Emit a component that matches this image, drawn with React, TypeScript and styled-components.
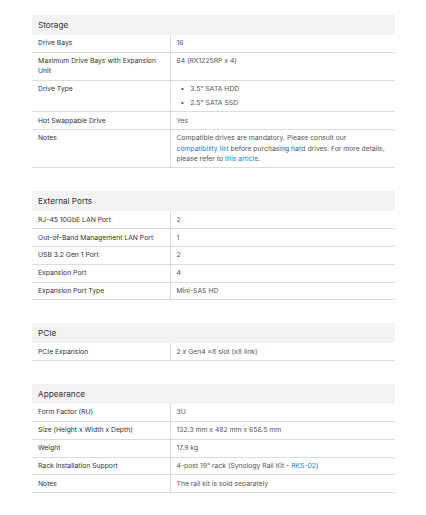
import React from "react";
import styled, { createGlobalStyle } from "styled-components";

const GlobalStyle = createGlobalStyle`
  body {
    margin: 0;
    background: #ffffff;
    font-family: Inter, "Noto Sans", sans-serif;
    color: #333333;
  }
`;

const Page = styled.div`
  padding: 15px 0 20px 32px;
  display: flex;
  flex-direction: column;
  gap: 23px;
`;

const Section = styled.table`
  width: 363px;
  border-collapse: collapse;
  font-size: 6.8px;
  line-height: 10.3px;
  table-layout: fixed;
`;

const LabelCol = styled.col`
  width: 138px;
`;

const HeadCell = styled.th`
  background: #f3f3f3;
  text-align: left;
  font-weight: 400;
  font-size: 8.2px;
  color: #333;
  height: 20px;
  padding: 0 6px;
`;

const Row = styled.tr`
  border-bottom: 1px solid #dcdcdc;
`;

const Label = styled.td`
  padding: 3.3px 6px 3.2px;
  vertical-align: top;
  border-right: 1px solid #dcdcdc;
  color: #333;
`;

const Value = styled.td`
  padding: 3.3px 6px 3.2px;
  vertical-align: top;
  color: #555;
`;

const Bullets = styled.ul`
  margin: 0;
  padding: 0 0 0 4px;
  list-style: none;
  display: flex;
  flex-direction: column;
  gap: 3.4px;
  li::before {
    content: "•";
    margin-right: 6px;
  }
`;

const Link = styled.a`
  color: #1a7fe0;
  text-decoration: none;
`;

type Spec = { label: string; value: React.ReactNode };

const sections: { title: string; rows: Spec[] }[] = [
  {
    title: "Storage",
    rows: [
      { label: "Drive Bays", value: "16" },
      { label: "Maximum Drive Bays with Expansion Unit", value: "64 (RX1225RP x 4)" },
      {
        label: "Drive Type",
        value: (
          <Bullets>
            <li>3.5" SATA HDD</li>
            <li>2.5" SATA SSD</li>
          </Bullets>
        ),
      },
      { label: "Hot Swappable Drive", value: "Yes" },
      {
        label: "Notes",
        value: (
          <>
            Compatible drives are mandatory. Please consult our{" "}
            <Link href="#">compatibility list</Link> before purchasing hard drives. For more details,
            please refer to <Link href="#">this article</Link>.
          </>
        ),
      },
    ],
  },
  {
    title: "External Ports",
    rows: [
      { label: "RJ-45 10GbE LAN Port", value: "2" },
      { label: "Out-of-Band Management LAN Port", value: "1" },
      { label: "USB 3.2 Gen 1 Port", value: "2" },
      { label: "Expansion Port", value: "4" },
      { label: "Expansion Port Type", value: "Mini-SAS HD" },
    ],
  },
  {
    title: "PCIe",
    rows: [{ label: "PCIe Expansion", value: "2 x Gen4 ×8 slot (x8 link)" }],
  },
  {
    title: "Appearance",
    rows: [
      { label: "Form Factor (RU)", value: "3U" },
      { label: "Size (Height x Width x Depth)", value: "132.3 mm x 482 mm x 656.5 mm" },
      { label: "Weight", value: "17.9 kg" },
      {
        label: "Rack Installation Support",
        value: (
          <>
            4-post 19" rack (Synology Rail Kit - <Link href="#">RKS-02</Link>)
          </>
        ),
      },
      { label: "Notes", value: "The rail kit is sold separately" },
    ],
  },
];

const App = () => (
  <>
    <GlobalStyle />
    <Page>
      {sections.map((s) => (
        <Section key={s.title}>
          <colgroup>
            <LabelCol />
            <col />
          </colgroup>
          <thead>
            <tr>
              <HeadCell colSpan={2}>{s.title}</HeadCell>
            </tr>
          </thead>
          <tbody>
            {s.rows.map((r, i) => (
              <Row key={i}>
                <Label>{r.label}</Label>
                <Value>{r.value}</Value>
              </Row>
            ))}
          </tbody>
        </Section>
      ))}
    </Page>
  </>
);

export default App;
